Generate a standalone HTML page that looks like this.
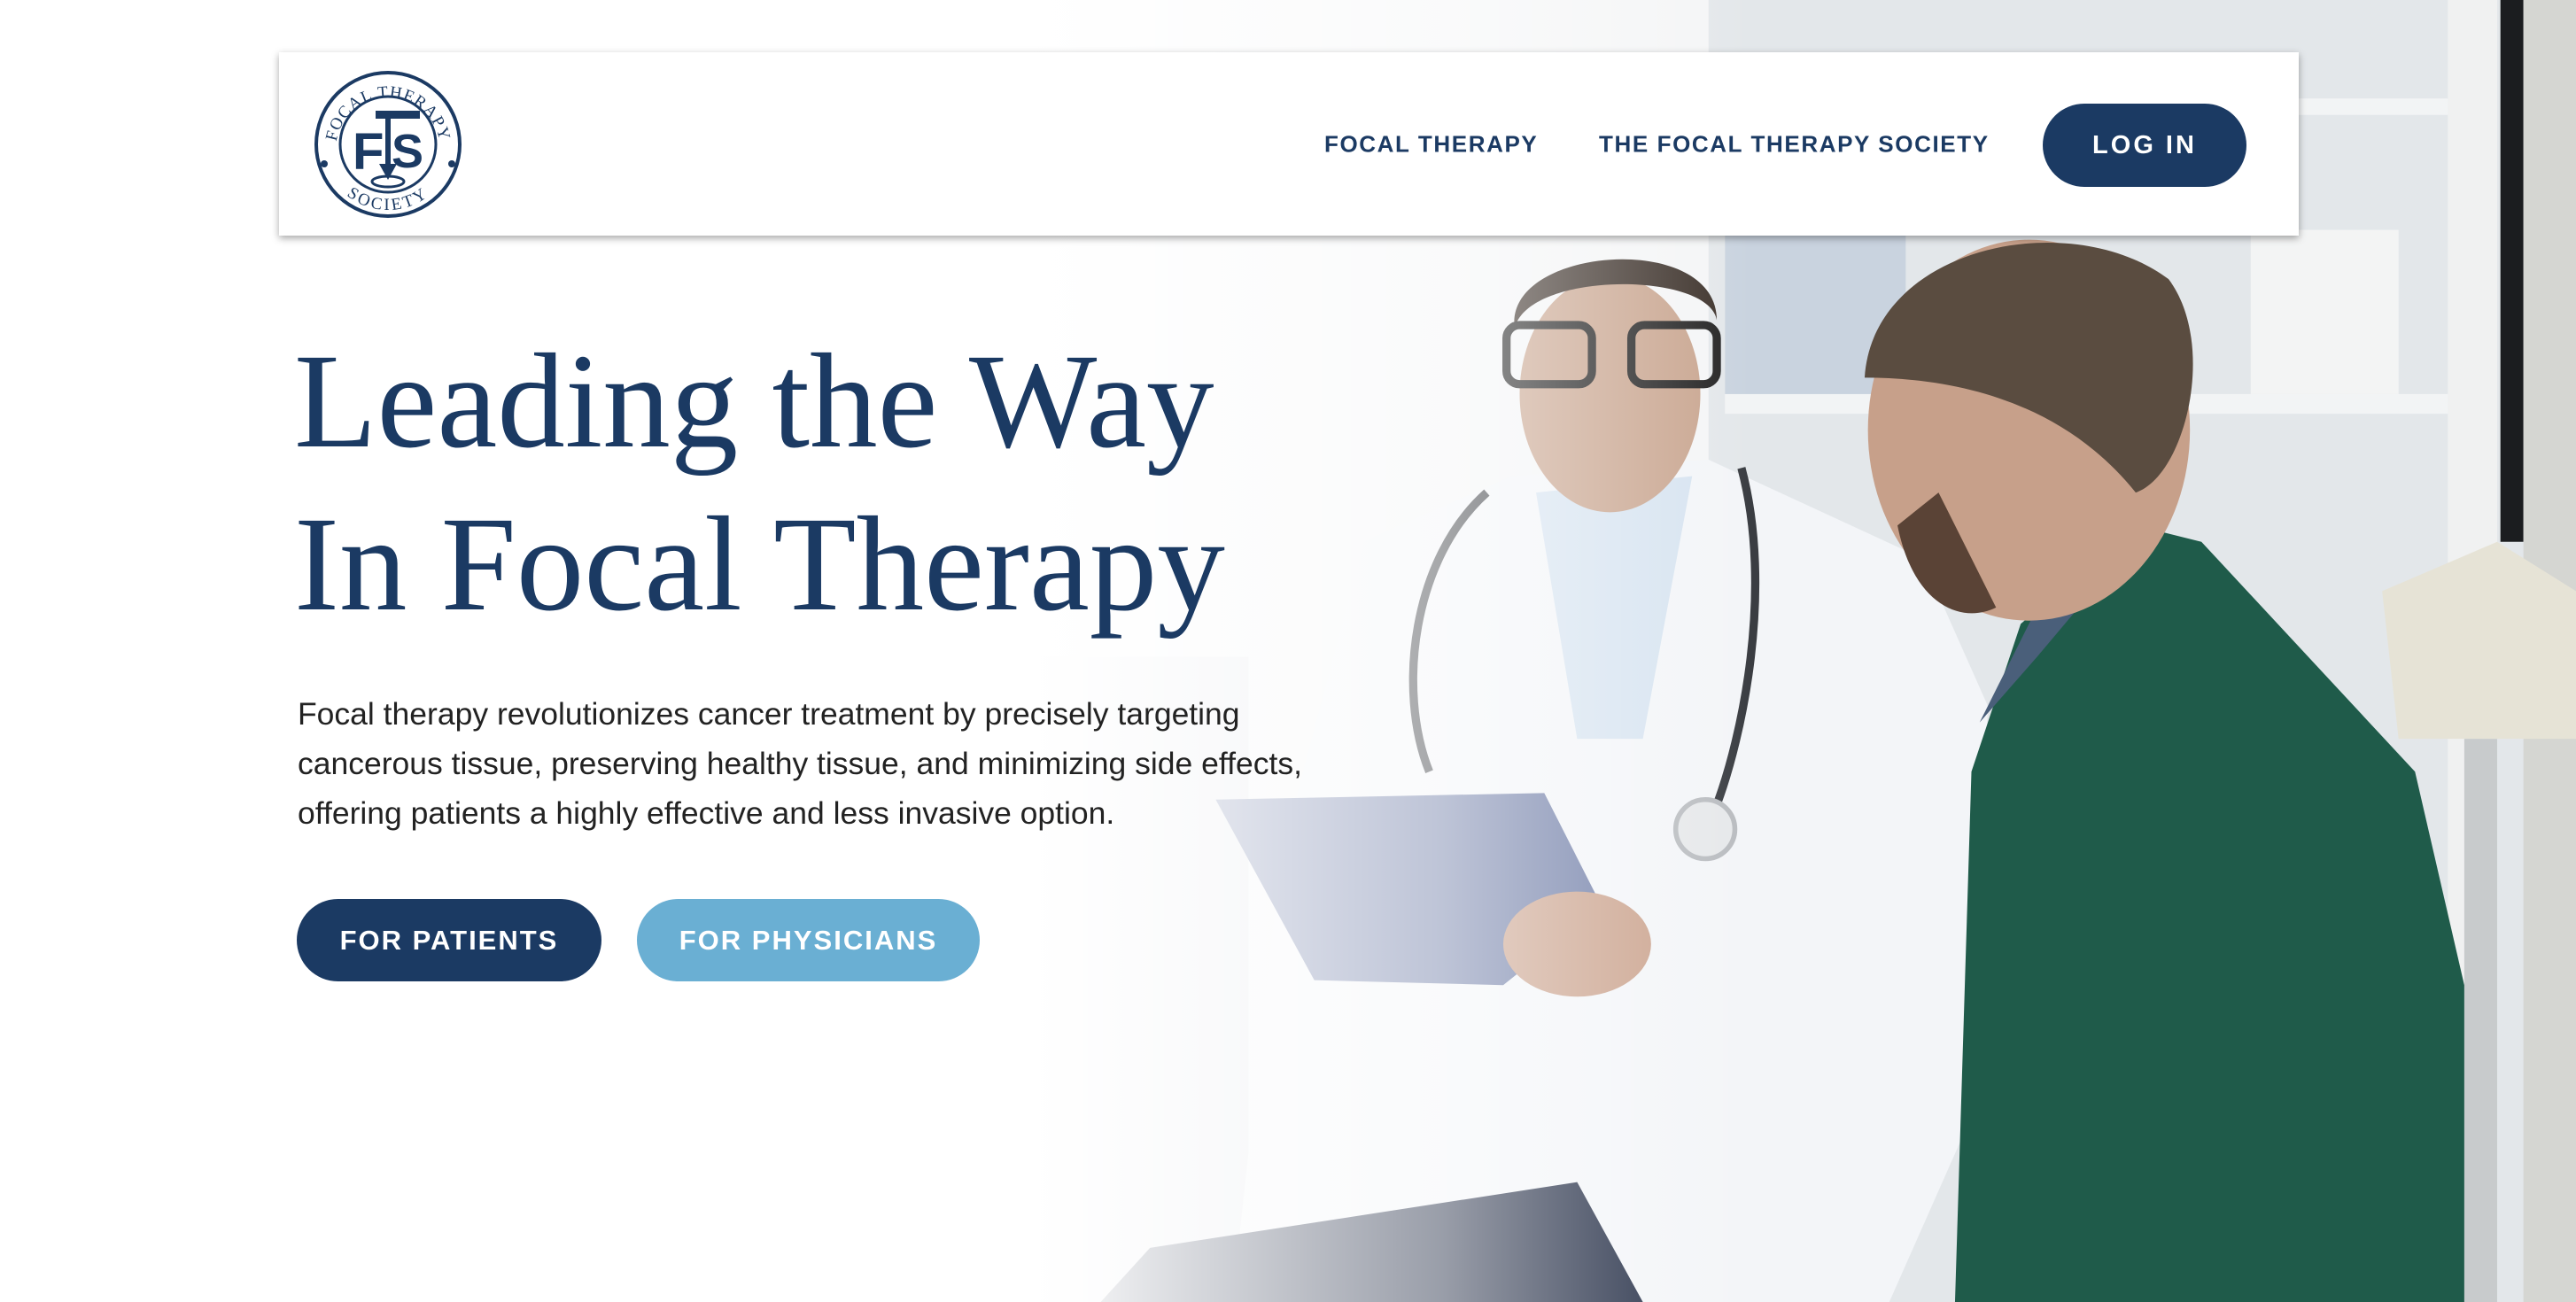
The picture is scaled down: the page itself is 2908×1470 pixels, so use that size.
<!DOCTYPE html>
<html><head><meta charset="utf-8"><style>
*{margin:0;padding:0;box-sizing:border-box}
body{width:2908px;height:1470px;overflow:hidden;position:relative;background:#fff;font-family:"Liberation Sans",sans-serif}
#bg{position:absolute;left:0;top:0;width:2908px;height:1470px}
.nav{position:absolute;left:315px;top:59px;width:2280px;height:207px;background:#fff;box-shadow:0 3px 8px rgba(0,0,0,.35)}
.nav a{position:absolute;top:104px;transform:translateY(-50%);color:#1b3a63;font-weight:bold;font-size:26px;letter-spacing:1.6px;text-decoration:none;white-space:nowrap}
.login{position:absolute;left:1991px;top:58px;width:230px;height:94px;border-radius:47px;background:#1b3a63;color:#fff;font-weight:bold;font-size:29px;letter-spacing:3px;display:flex;align-items:center;justify-content:center}
h1{position:absolute;left:332px;top:362px;font-family:"Liberation Serif",serif;font-weight:normal;color:#1b3a63;font-size:153px;line-height:184px;white-space:nowrap}
p{position:absolute;left:336px;top:778px;font-size:35.5px;line-height:56px;color:#222;white-space:nowrap}
.btn{position:absolute;top:1015px;height:93px;border-radius:47px;color:#fff;font-weight:bold;font-size:31px;letter-spacing:2px;display:flex;align-items:center;justify-content:center}
</style></head><body>
<svg id="bg" viewBox="0 0 1568 793" preserveAspectRatio="none">
<defs>
<linearGradient id="fade" x1="0" x2="1" y1="0" y2="0">
<stop offset="0" stop-color="#fff"/><stop offset="0.40" stop-color="#fff"/><stop offset="0.56" stop-color="#fff" stop-opacity="0.55"/><stop offset="0.68" stop-color="#fff" stop-opacity="0"/></linearGradient>
</defs>
<rect x="0" y="0" width="1568" height="793" fill="#f4f5f6"/>
<rect x="1040" y="0" width="500" height="793" fill="#e3e7ea"/>
<rect x="1050" y="240" width="440" height="12" fill="#f2f4f5"/>
<rect x="1050" y="60" width="440" height="10" fill="#f2f4f5"/>
<rect x="1050" y="140" width="110" height="100" fill="#c9d3df"/>
<rect x="1370" y="140" width="90" height="100" fill="#f3f4f4"/>
<rect x="1490" y="0" width="30" height="793" fill="#f0f1f1"/>
<rect x="1522" y="0" width="14" height="330" fill="#1b1d1f"/>
<rect x="1536" y="0" width="32" height="793" fill="#d5d6d2"/>
<polygon points="1450,360 1520,330 1568,360 1568,450 1460,450" fill="#e6e3d6"/>
<rect x="1500" y="450" width="20" height="343" fill="#c8cbcc"/>
<rect x="440" y="400" width="320" height="393" fill="#e5e7ec"/>
<polygon points="750,793 780,520 830,330 920,290 1040,280 1170,340 1210,430 1200,680 1150,793" fill="#f3f5f8"/>
<polygon points="935,300 1030,290 1000,450 960,450" fill="#d6e3f0"/>
<path d="M905,300 C860,340 850,420 870,470 M1060,285 C1080,360 1060,450 1045,490" stroke="#3a3d42" stroke-width="5" fill="none"/>
<circle cx="1038" cy="505" r="18" fill="#e6e8ea" stroke="#b9bcc0" stroke-width="3"/>
<ellipse cx="980" cy="240" rx="55" ry="72" fill="#c8a48e"/>
<path d="M922,200 C915,150 1045,140 1045,195 C1040,165 930,165 922,200Z" fill="#3b3029"/>
<rect x="917" y="198" width="52" height="36" rx="8" fill="none" stroke="#222" stroke-width="5"/>
<rect x="993" y="198" width="52" height="36" rx="8" fill="none" stroke="#222" stroke-width="5"/>
<polygon points="670,793 700,760 960,720 1000,793" fill="#1d2740"/>
<polygon points="740,487 940,483 975,552 915,600 800,597" fill="#6e7ca6"/>
<ellipse cx="960" cy="575" rx="45" ry="32" fill="#c9a08a"/>
<polygon points="1190,793 1200,470 1230,380 1300,320 1340,330 1470,470 1500,600 1500,793" fill="#1f5b4a"/>
<polygon points="1205,440 1260,330 1320,305 1240,400" fill="#4a5f7a"/>
<ellipse cx="1235" cy="262" rx="98" ry="116" fill="#c7a08a"/>
<path d="M1135,230 C1140,150 1260,125 1320,170 C1350,210 1330,290 1300,300 C1260,250 1200,230 1135,230Z" fill="#5a4c40"/>
<path d="M1155,320 C1165,370 1195,380 1215,370 L1180,300Z" fill="#5a4336"/>
<rect x="0" y="0" width="1568" height="793" fill="url(#fade)"/>
</svg>
<div class="nav">
<svg style="position:absolute;left:39px;top:20px" width="168" height="168" viewBox="0 0 168 168">
<circle cx="84" cy="84" r="81" fill="none" stroke="#1b3a63" stroke-width="4"/>
<circle cx="84" cy="84" r="54" fill="none" stroke="#1b3a63" stroke-width="3"/>
<defs><path id="arc" d="M25,90 A59,59 0 0 1 143,90"/><path id="arc2" d="M10,84 A74,74 0 0 0 158,84"/></defs>
<text font-family="Liberation Serif,serif" font-size="19" fill="#1b3a63" letter-spacing="1"><textPath href="#arc" startOffset="50%" text-anchor="middle">FOCAL THERAPY</textPath></text>
<text font-family="Liberation Serif,serif" font-size="19" fill="#1b3a63" letter-spacing="3"><textPath href="#arc2" startOffset="50%" text-anchor="middle">SOCIETY</textPath></text>
<circle cx="12" cy="106" r="4" fill="#1b3a63"/><circle cx="156" cy="106" r="4" fill="#1b3a63"/>
<rect x="70" y="46" width="50" height="9" fill="#1b3a63"/>
<text x="44" y="112" font-family="Liberation Sans,sans-serif" font-weight="bold" font-size="58" fill="#1b3a63">F</text>
<text x="88" y="110" font-family="Liberation Sans,sans-serif" font-weight="bold" font-size="54" fill="#1b3a63">S</text>
<rect x="81" y="50" width="6" height="62" fill="#1b3a63"/>
<polygon points="74,106 94,106 84,124" fill="#1b3a63"/>
<ellipse cx="84" cy="126" rx="18" ry="6" fill="none" stroke="#1b3a63" stroke-width="3"/>
</svg>
<a style="left:1180px">FOCAL THERAPY</a>
<a style="left:1490px">THE FOCAL THERAPY SOCIETY</a>
<div class="login">LOG IN</div>
</div>
<h1>Leading the Way<br>In Focal Therapy</h1>
<p>Focal therapy revolutionizes cancer treatment by precisely targeting<br>cancerous tissue, preserving healthy tissue, and minimizing side effects,<br>offering patients a highly effective and less invasive option.</p>
<div class="btn" style="left:335px;width:344px;background:#1b3a63">FOR PATIENTS</div>
<div class="btn" style="left:719px;width:387px;background:#6aafd3">FOR PHYSICIANS</div>
</body></html>
